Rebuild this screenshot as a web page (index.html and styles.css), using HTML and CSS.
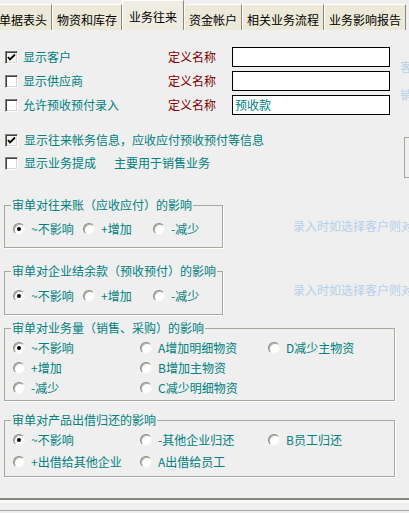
FILE: index.html
```html
<!DOCTYPE html>
<html lang="zh-CN">
<head>
<meta charset="utf-8">
<link rel="stylesheet" href="styles.css">
</head>
<body>
<div class="page">
  <div class="tabs">
    <div class="tab first">单据表头</div>
    <div class="tab">物资和库存</div>
    <div class="tab active">业务往来</div>
    <div class="tab">资金帐户</div>
    <div class="tab">相关业务流程</div>
    <div class="tab">业务影响报告</div>
  </div>

  <div class="defs">
    <div class="def-rows">
      <div class="def-row">
        <span class="cb checked"><svg viewBox="0 0 9 9" width="9" height="9"><path d="M1 4 L3 6.5 L8 1.5" fill="none" stroke="#000" stroke-width="1.8"/></svg></span>
        <span class="cb-label">显示客户</span>
        <span class="def-name">定义名称</span>
        <span class="input"></span>
      </div>
      <div class="def-row">
        <span class="cb"></span>
        <span class="cb-label">显示供应商</span>
        <span class="def-name">定义名称</span>
        <span class="input"></span>
      </div>
      <div class="def-row">
        <span class="cb"></span>
        <span class="cb-label">允许预收预付录入</span>
        <span class="def-name">定义名称</span>
        <span class="input">预收款</span>
      </div>
    </div>
    <div class="faint-col">
      <span>客户</span>
      <span>销售</span>
    </div>
  </div>

  <div class="opts">
    <div class="opt-rows">
      <div class="opt-row">
        <span class="cb checked"><svg viewBox="0 0 9 9" width="9" height="9"><path d="M1 4 L3 6.5 L8 1.5" fill="none" stroke="#000" stroke-width="1.8"/></svg></span>
        <span class="opt-label">显示往来帐务信息，应收应付预收预付等信息</span>
      </div>
      <div class="opt-row">
        <span class="cb"></span>
        <span class="opt-label">显示业务提成</span>
        <span class="note">主要用于销售业务</span>
      </div>
    </div>
    <div class="side-box"></div>
  </div>

  <div class="grp-row first-grp">
    <fieldset class="grp small">
      <legend>审单对往来账（应收应付）的影响</legend>
      <div class="radios cols3">
        <label class="ropt"><span class="radio on"></span>~不影响</label>
        <label class="ropt"><span class="radio"></span>+增加</label>
        <label class="ropt"><span class="radio"></span>-减少</label>
      </div>
    </fieldset>
    <span class="faint-note">录入时如选择客户则对往来账产生影响</span>
  </div>

  <div class="grp-row second-grp">
    <fieldset class="grp small tall">
      <legend>审单对企业结余款（预收预付）的影响</legend>
      <div class="radios cols3">
        <label class="ropt"><span class="radio on"></span>~不影响</label>
        <label class="ropt"><span class="radio"></span>+增加</label>
        <label class="ropt"><span class="radio"></span>-减少</label>
      </div>
    </fieldset>
    <span class="faint-note two">录入时如选择客户则对结余款产生影响</span>
  </div>

  <fieldset class="grp wide g3">
    <legend>审单对业务量（销售、采购）的影响</legend>
    <div class="radios cols-wide rows19">
      <label class="ropt"><span class="radio on"></span>~不影响</label>
      <label class="ropt"><span class="radio"></span>A增加明细物资</label>
      <label class="ropt"><span class="radio"></span>D减少主物资</label>
      <label class="ropt"><span class="radio"></span>+增加</label>
      <label class="ropt"><span class="radio"></span>B增加主物资</label>
      <span></span>
      <label class="ropt"><span class="radio"></span>-减少</label>
      <label class="ropt"><span class="radio"></span>C减少明细物资</label>
    </div>
  </fieldset>

  <fieldset class="grp wide g4">
    <legend>审单对产品出借归还的影响</legend>
    <div class="radios cols-wide rows20">
      <label class="ropt"><span class="radio on"></span>~不影响</label>
      <label class="ropt"><span class="radio"></span>-其他企业归还</label>
      <label class="ropt"><span class="radio"></span>B员工归还</label>
      <label class="ropt"><span class="radio"></span>+出借给其他企业</label>
      <label class="ropt"><span class="radio"></span>A出借给员工</label>
    </div>
  </fieldset>

  <div class="footer"></div>
</div>
</body>
</html>
```

FILE: styles.css
```css
html, body {
  margin: 0;
  padding: 0;
  background: #eeefee;
  overflow: hidden;
}

body {
  font-family: "Noto Sans CJK SC", "Liberation Sans", sans-serif;
  font-size: 12px;
  color: #008080;
}

.page {
  width: 409px;
  height: 513px;
  overflow: hidden;
}

/* Tabs */
.tabs {
  display: flex;
  height: 30px;
  align-items: flex-start;
}

.tab {
  flex-shrink: 0;
  box-sizing: border-box;
  margin-top: 4px;
  height: 26px;
  padding: 8px 4px 0;
  line-height: 13px;
  color: #000;
  background: #ece9d8;
  border-top: 1px solid #fff;
  border-left: 1px solid #fff;
  border-right: 1px solid #8a887e;
  white-space: nowrap;
}

.tab.first {
  margin-left: -6px;
}

.tab.active {
  margin-top: 0;
  height: 30px;
  padding: 9px 6px 0;
  background: #efede2;
}

/* Checkbox */
.cb {
  flex-shrink: 0;
  box-sizing: border-box;
  width: 13px;
  height: 13px;
  background: #fff;
  border: 1px solid;
  border-color: #808080 #fff #fff #808080;
  box-shadow: inset 1px 1px 0 #404040, inset -1px -1px 0 #d8d6cc;
  display: flex;
  align-items: center;
  justify-content: center;
}

.cb.checked {
  background: #f4f4f0;
}

.cb svg {
  display: block;
}

/* Definition rows */
.defs {
  display: flex;
  margin-top: 17px;
}

.def-rows {
  display: flex;
  flex-direction: column;
  gap: 4px;
  flex-shrink: 0;
}

.def-row {
  display: flex;
  align-items: center;
  height: 20px;
}

.def-row .cb {
  margin-left: 5px;
}

.cb-label {
  margin-left: 5px;
  width: 145px;
  line-height: 14px;
}

.def-name {
  width: 64px;
  color: #800000;
  line-height: 14px;
}

.input {
  box-sizing: border-box;
  width: 158px;
  height: 20px;
  background: #fff;
  border: 1px solid #000;
  padding-left: 2px;
  line-height: 18px;
  color: #008080;
}

.faint-col {
  flex-shrink: 0;
  margin-left: 10px;
  padding-top: 14px;
  display: flex;
  flex-direction: column;
  gap: 16px;
  line-height: 12px;
  color: #b4cfea;
  white-space: nowrap;
}

/* Options */
.opts {
  display: flex;
  margin-top: 15px;
}

.opt-rows {
  display: flex;
  flex-direction: column;
  gap: 3px;
}

.opt-row {
  display: flex;
  align-items: center;
  height: 20px;
}

.opt-row .cb {
  margin-left: 5px;
}

.opt-label {
  margin-left: 6px;
  line-height: 14px;
  white-space: nowrap;
}

.note {
  margin-left: 18px;
  line-height: 14px;
}

.side-box {
  flex-shrink: 0;
  margin-left: auto;
  margin-top: 7px;
  box-sizing: border-box;
  width: 5px;
  height: 41px;
  border: 1px solid #a8a79c;
  border-right: none;
}

/* Group boxes */
.grp-row {
  display: flex;
  align-items: flex-start;
}

.first-grp {
  margin-top: 19px;
}

.second-grp {
  margin-top: 15px;
}

.grp {
  box-sizing: border-box;
  margin: 0 0 0 4px;
  padding: 8px 6px 10px;
  border: 1px solid #a9a89c;
  box-shadow: 1px 1px 0 #fff;
  min-width: 0;
  flex-shrink: 0;
}

.grp legend {
  padding: 0 1px;
  line-height: 16px;
  color: #008080;
  white-space: nowrap;
}

.grp.small {
  width: 219px;
}

.grp.tall {
  padding-top: 9px;
}

.grp.wide {
  width: 391px;
}

.g3 {
  margin-top: 5px;
  padding-top: 2px;
  padding-bottom: 3px;
}

.g4 {
  margin-top: 11px;
  padding-top: 2px;
  padding-bottom: 4px;
}

.radios {
  display: grid;
  margin-left: 2px;
}

.cols3 {
  grid-template-columns: 70px 70px auto;
  grid-auto-rows: 16px;
}

.cols-wide {
  grid-template-columns: 127px 128px auto;
}

.rows19 {
  grid-auto-rows: 19px;
  row-gap: 1px;
}

.rows20 {
  grid-auto-rows: 20px;
  row-gap: 2px;
}

.ropt {
  display: flex;
  align-items: center;
  gap: 6px;
  white-space: nowrap;
  line-height: 14px;
}

.radio {
  flex-shrink: 0;
  box-sizing: border-box;
  width: 12px;
  height: 12px;
  border-radius: 50%;
  background: #fff;
  border: 1px solid;
  border-color: #8c8a80 #f4f3ee #f4f3ee #8c8a80;
  box-shadow: inset 1px 1px 0 #b0aea4;
  display: flex;
  align-items: center;
  justify-content: center;
}

.radio.on::after {
  content: "";
  width: 4px;
  height: 4px;
  border-radius: 50%;
  background: #000;
}

.faint-note {
  flex-shrink: 0;
  margin-left: 70px;
  margin-top: 21px;
  line-height: 16px;
  color: #b4cfea;
  white-space: nowrap;
}

.faint-note.two {
  margin-top: 19px;
}

/* Footer lines */
.footer {
  box-sizing: border-box;
  margin-top: 21px;
  height: 13px;
  border-top: 2px solid #87867e;
  border-bottom: 1px solid #a9a8a0;
  box-shadow: inset 0 3px 0 #f8f8f4;
}
```
